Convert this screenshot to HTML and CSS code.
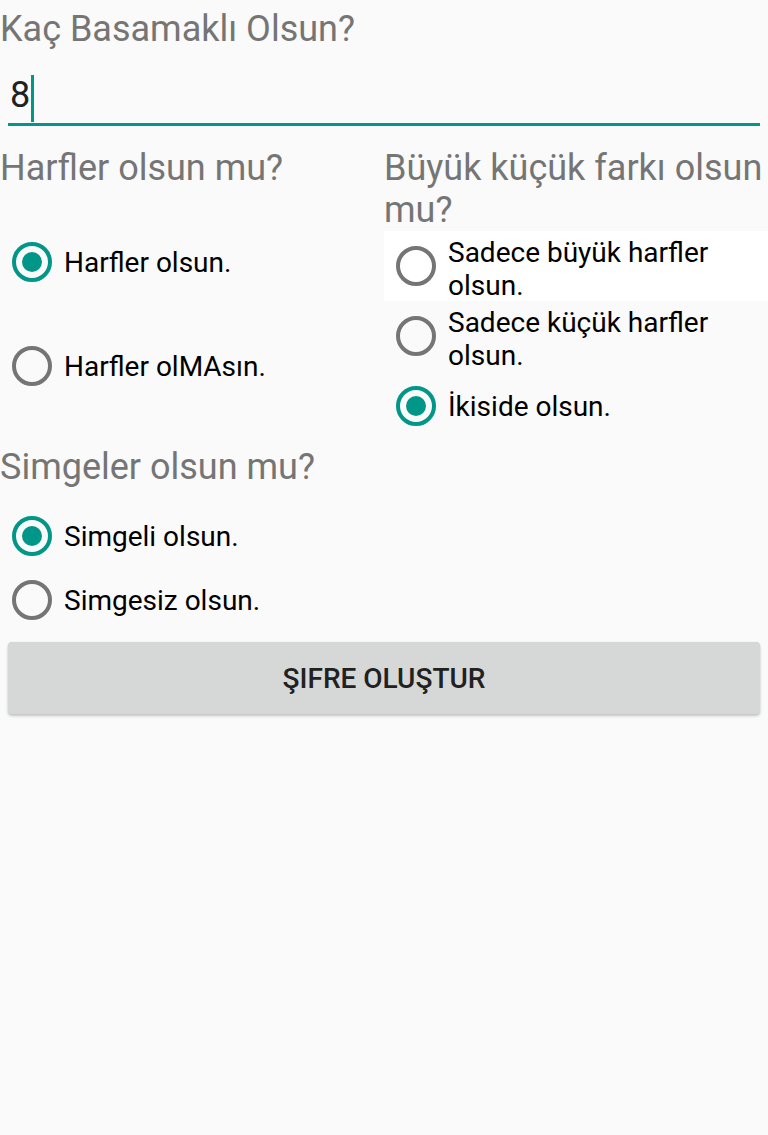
FILE: index.html
```html
<!DOCTYPE html>
<html lang="tr">
<head>
<meta charset="utf-8">
<link rel="stylesheet" href="styles.css">
</head>
<body>
<main class="screen">
  <h1 class="heading first">Kaç Basamaklı Olsun?</h1>
  <div class="field"><span class="value">8</span><span class="caret"></span></div>

  <div class="columns">
    <section class="col">
      <h2 class="heading">Harfler olsun mu?</h2>
      <div class="group group-left">
        <label class="radio tall"><svg class="dot" viewBox="0 0 40 40"><circle class="ring on" cx="20" cy="20" r="18"/><circle class="fill" cx="20" cy="20" r="10"/></svg><span class="label">Harfler olsun.</span></label>
        <label class="radio tall"><svg class="dot" viewBox="0 0 40 40"><circle class="ring" cx="20" cy="20" r="18"/></svg><span class="label">Harfler olMAsın.</span></label>
      </div>
    </section>
    <section class="col">
      <h2 class="heading">Büyük küçük farkı olsun mu?</h2>
      <div class="group">
        <label class="radio mid white"><svg class="dot" viewBox="0 0 40 40"><circle class="ring" cx="20" cy="20" r="18"/></svg><span class="label two">Sadece büyük harfler olsun.</span></label>
        <label class="radio mid"><svg class="dot" viewBox="0 0 40 40"><circle class="ring" cx="20" cy="20" r="18"/></svg><span class="label two">Sadece küçük harfler olsun.</span></label>
        <label class="radio mid"><svg class="dot" viewBox="0 0 40 40"><circle class="ring on" cx="20" cy="20" r="18"/><circle class="fill" cx="20" cy="20" r="10"/></svg><span class="label">İkiside olsun.</span></label>
      </div>
    </section>
  </div>

  <h2 class="heading">Simgeler olsun mu?</h2>
  <div class="group group-symbols">
    <label class="radio short"><svg class="dot" viewBox="0 0 40 40"><circle class="ring on" cx="20" cy="20" r="18"/><circle class="fill" cx="20" cy="20" r="10"/></svg><span class="label">Simgeli olsun.</span></label>
    <label class="radio short"><svg class="dot" viewBox="0 0 40 40"><circle class="ring" cx="20" cy="20" r="18"/></svg><span class="label">Simgesiz olsun.</span></label>
  </div>

  <button class="btn" type="button">ŞIFRE OLUŞTUR</button>
</main>
</body>
</html>
```

FILE: styles.css
```css
* { box-sizing: border-box; }
html, body { margin: 0; padding: 0; background: #fafafa; }
body { font-family: Roboto, "Noto Sans", sans-serif; color: #000; }
.screen { width: 768px; min-height: 1135px; display: flex; flex-direction: column; }

.heading {
  margin: 0;
  font-size: 36px;
  font-weight: 400;
  line-height: 42px;
  color: #757575;
  padding-top: 5px;
}
.heading.first { padding-top: 8px; }

.field {
  margin: 15px 8px 0;
  height: 61px;
  border-bottom: 3px solid #009688;
  display: flex;
  align-items: flex-start;
  padding-left: 2px;
}
.value { font-size: 36px; line-height: 46px; color: #212121; margin-top: 7px; }
.caret { width: 3px; height: 47px; background: #009688; margin-left: 1px; margin-top: 10px; }

.columns { display: grid; grid-template-columns: 384px 384px; margin-top: 16px; }
.col { display: flex; flex-direction: column; }

.group { display: flex; flex-direction: column; }
.group-left { margin-top: 21px; }
.group-symbols { margin-top: 16px; }

.radio { display: flex; align-items: center; padding-left: 12px; }
.radio.tall { height: 104px; }
.radio.mid { height: 70px; }
.radio.short { height: 64px; }
.radio.white { background: #fff; }

.dot { width: 40px; height: 40px; flex: none; }
.ring { fill: none; stroke: #757575; stroke-width: 4; }
.ring.on { stroke: #009688; }
.fill { fill: #009688; }

.label { margin-left: 12px; font-size: 28px; line-height: 33px; color: #000; }
.label.two { margin-top: 6px; }

.btn {
  margin: 10px 8px 0;
  height: 72px;
  border: 0;
  border-radius: 4px;
  background: #d6d7d7;
  box-shadow: 0 2px 3px rgba(0,0,0,0.22), 0 0 1px rgba(0,0,0,0.12);
  font-family: Roboto, "Noto Sans", sans-serif;
  font-weight: 500;
  font-size: 28px;
  color: #212121;
  letter-spacing: 0;
}
```
